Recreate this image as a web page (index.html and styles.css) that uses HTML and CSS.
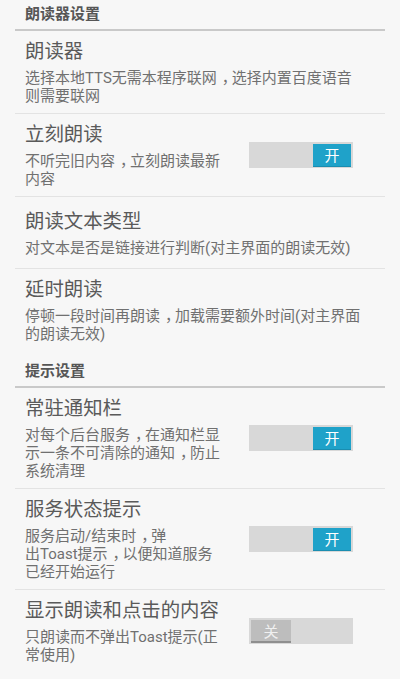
FILE: index.html
```html
<!DOCTYPE html>
<html lang="zh-CN">
<head>
<meta charset="utf-8">
<title>设置</title>
<link rel="stylesheet" href="styles.css">
</head>
<body>
<div class="list">
  <div class="category category-first">朗读器设置</div>
  <div class="item">
    <div class="text">
      <div class="title">朗读器</div>
      <div class="summary">选择本地TTS无需本程序联网<span class="p">，</span>选择内置百度语音<br>则需要联网</div>
    </div>
  </div>
  <div class="item">
    <div class="text">
      <div class="title">立刻朗读</div>
      <div class="summary">不听完旧内容<span class="p">，</span>立刻朗读最新<br>内容</div>
    </div>
    <div class="switch on"><span class="thumb">开</span></div>
  </div>
  <div class="item">
    <div class="text">
      <div class="title">朗读文本类型</div>
      <div class="summary">对文本是否是链接进行判断(对主界面的朗读无效)</div>
    </div>
  </div>
  <div class="item item-last">
    <div class="text">
      <div class="title">延时朗读</div>
      <div class="summary">停顿一段时间再朗读<span class="p">，</span>加载需要额外时间(对主界面<br>的朗读无效)</div>
    </div>
  </div>

  <div class="category">提示设置</div>
  <div class="item">
    <div class="text">
      <div class="title">常驻通知栏</div>
      <div class="summary">对每个后台服务<span class="p">，</span>在通知栏显<br>示一条不可清除的通知<span class="p">，</span>防止<br>系统清理</div>
    </div>
    <div class="switch on"><span class="thumb">开</span></div>
  </div>
  <div class="item">
    <div class="text">
      <div class="title">服务状态提示</div>
      <div class="summary">服务启动/结束时<span class="p">，</span>弹<br>出Toast提示<span class="p">，</span>以便知道服务<br>已经开始运行</div>
    </div>
    <div class="switch on"><span class="thumb">开</span></div>
  </div>
  <div class="item item-last">
    <div class="text">
      <div class="title">显示朗读和点击的内容</div>
      <div class="summary">只朗读而不弹出Toast提示(正<br>常使用)</div>
    </div>
    <div class="switch off"><span class="thumb">关</span></div>
  </div>
</div>
</body>
</html>
```

FILE: styles.css
```css
html, body {
  margin: 0;
  padding: 0;
  background: #f7f7f7;
}
body {
  font-family: "Roboto", "Noto Sans CJK SC", sans-serif;
  width: 400px;
  height: 679px;
  overflow: hidden;
}
.list {
  margin: 0 15px;
}
.category {
  font-size: 15px;
  font-weight: bold;
  line-height: 18px;
  color: #565656;
  padding: 11px 10px 6px;
  border-bottom: 2px solid #c9c9c9;
}
.category-first {
  padding-top: 5px;
}
.item {
  display: flex;
  align-items: center;
  min-height: 72px;
  box-sizing: border-box;
  padding: 8px 0 8px 10px;
  border-bottom: 1px solid #e3e3e3;
}
.item-last {
  border-bottom: none;
}
.text {
  flex: 1;
  min-width: 0;
}
.title {
  font-size: 19.4px;
  line-height: 25px;
  color: #5a5a5a;
}
.summary {
  margin-top: 5px;
  font-size: 15px;
  line-height: 18px;
  color: #707070;
}
.p {
  padding-left: 5px;
  letter-spacing: -5px;
}
.switch {
  flex: none;
  width: 104px;
  height: 26px;
  margin-right: 32px;
  background: #d8d8d8;
  display: flex;
  align-items: center;
  box-sizing: border-box;
  padding: 2px;
}
.switch.on {
  justify-content: flex-end;
}
.thumb {
  width: 38px;
  height: 23px;
  display: flex;
  align-items: center;
  justify-content: center;
  font-size: 15px;
  color: #ffffff;
  box-sizing: border-box;
}
.switch.on .thumb {
  background: #1fa2c9;
  border-bottom: 1px solid #1a8db0;
}
.switch.off .thumb {
  width: 40px;
  background: #bdbdbd;
  color: #f0f0f0;
  border-bottom: 2px solid #8f8f8f;
}
```
